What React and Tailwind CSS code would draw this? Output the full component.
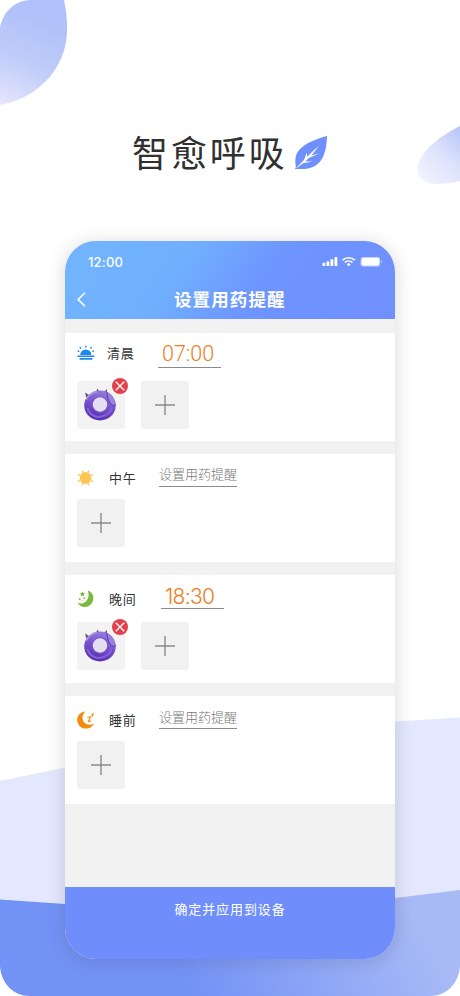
import React, { useState } from "react";

const SunriseIcon = () => (
  <svg width="18" height="16" viewBox="0 0 18 16" fill="#1e88e5">
    <path d="M3.200 10a5.600 5.600 0 0 1 11.200 0z" />
    <rect x="0.300" y="10.400" width="17.200" height="1.600" rx="0.700" />
    <rect x="2.400" y="13" width="13.200" height="1.700" rx="0.800" />
    <g stroke="#1e88e5" strokeWidth="1.500" strokeLinecap="round">
      <path d="M8.800 1.300v.7M3.200 2.600l.4.500M14.400 2.600l-.4.500M1.200 6l.5.200M16.400 6l-.5.200" />
    </g>
  </svg>
);

const SunIcon = () => (
  <svg width="18" height="18" viewBox="0 0 18 18">
    <circle cx="8.500" cy="9" r="5.900" fill="#fcc554" />
    <g fill="#fbc04a">
      <path d="M4.800.9l2 2-1.800.9zM12.200.9l-.2 2.900-1.800-.9zM16.600 5.300l-1.700 2.100-1-1.900zM16.600 12.700l-2.700-.2 1-1.900zM12.200 17.100l-2-2 1.800-.9zM4.800 17.100l.2-2.900 1.800.9zM.4 12.700l1.700-2.100 1 1.900zM.4 5.300l2.700.2-1 1.900z" />
    </g>
  </svg>
);

const MoonIcon = () => (
  <svg width="18" height="18" viewBox="0 0 18 18" fill="#7cb83a">
    <path d="M10.600.6c4.200 1.300 6.500 4.900 5.600 9.200-.9 4.600-4.900 7.700-9.300 7.200C4 16.700 1.700 15 .4 12.500c2.700 1.600 5.900 1.300 8.200-.8C11.700 9 12.400 4.500 10.600.6z" />
    <path d="M5.400 1.400l.8 1.700 1.900.2-1.400 1.300.4 1.900-1.700-1-1.700.9.500-1.800L2.800 3.300l1.900-.2z" />
    <circle cx="2.700" cy="9.200" r="0.900" />
    <circle cx="7.300" cy="8.200" r="0.900" />
    <circle cx="4.700" cy="10.500" r="0.500" />
  </svg>
);

const SleepIcon = () => (
  <svg width="18" height="18" viewBox="0 0 18 18" fill="#f58a0b">
    <path d="M8.600.6C4.100.5.2 4.300.2 9c0 4.800 3.800 8.600 8.600 8.600 3.900 0 7-2.200 8.300-5.400-1.500 1.200-3.100 1.600-4.900 1.500C8.500 13.500 5.600 10.700 5.500 7 5.400 4.400 6.600 2 8.600.6z" />
    <path
      d="M10.400 6.300l3.100-.4-2.200 4.600 2.600-.4M14.600 3.200l1.500-.2-1.200 2 1.500-.2"
      fill="none"
      stroke="#f58a0b"
      strokeWidth="1.100"
    />
  </svg>
);

const Leaf = () => (
  <svg width="34" height="36" viewBox="0 0 34 36" className="ml-[6px]">
    <path
      d="M33 .8C24 4.200 5 8.500 1.700 22c-.7 4-.4 7.200.3 9.800L.8 34.300c4.500-.8 8.500 0 13.200-.9C27 31.500 32.800 19 33 .8z"
      fill="#6f8ffc"
    />
    <path
      d="M1 34.400C4.500 30 7.500 28 9.900 25l3-7.600.3 4.400C16.500 18.500 20 15 25.300 10.500 21.500 15.500 19.500 18 17.200 20.600l8.300-2.300-10.600 4.700-3.500 3.600c2.300 0 5.200-.3 7.400-.2-4.300.9-6.800 1.200-9.300 1.700C6 30.500 4 32.500 1 34.400z"
      fill="#fff"
    />
  </svg>
);

const StatusIcons = () => (
  <svg width="61" height="12" viewBox="0 0 61 12" fill="#fff">
    <rect x="0.500" y="6.800" width="2.800" height="3.200" rx="0.600" />
    <rect x="4.500" y="5.300" width="2.800" height="4.700" rx="0.600" />
    <rect x="8.500" y="3.300" width="2.800" height="6.700" rx="0.600" />
    <rect x="12.500" y="1.100" width="2.800" height="8.900" rx="0.600" />
    <g fill="none" stroke="#fff" strokeWidth="1.700">
      <path d="M20.600 4.200a8.800 8.800 0 0 1 12.200 0M22.900 6.500a5.500 5.500 0 0 1 7.600 0" />
    </g>
    <path d="M24.700 8.200a3 3 0 0 1 4 0l-2 2.100z" />
    <rect x="38.600" y="0.900" width="19.600" height="9.600" rx="2.800" opacity="0.600" />
    <rect x="39.800" y="2" width="17.200" height="7.400" rx="1.800" />
    <path d="M59.200 4.200c1.300.5 1.300 2.400 0 2.900z" opacity="0.600" />
  </svg>
);

const Inhaler = () => (
  <svg width="34" height="34" viewBox="0 0 34 34">
    <defs>
      <linearGradient id="ring" x1="0.700" y1="0" x2="0.400" y2="1">
        <stop offset="0" stopColor="#9a7ee0" />
        <stop offset="0.500" stopColor="#7750cc" />
        <stop offset="1" stopColor="#5330ae" />
      </linearGradient>
    </defs>
    <path d="M3 9.500l-.8-5 4 2.500zM13 4l1.400-3.500L16.500 4zM21 4l2.700-3 .7 4.500z" fill="#655d80" />
    <ellipse cx="17" cy="17.500" rx="15.800" ry="15" fill="url(#ring)" />
    <path d="M3 12C5 8 9 4.500 14 3.500" stroke="#a995dd" strokeWidth="1.500" fill="none" />
    <path d="M4.500 20c2 7 8 10 14 8.500 5-1 9-4.500 10.500-9" stroke="#8560dc" strokeWidth="2" fill="none" />
    <path d="M24 4c4 1.500 6.500 4.500 7.500 8.500l1 4-2.500 1c-3-1.500-4.500-5-5-8z" fill="#9b80da" />
    <path d="M24 4c0 5 1.500 11 6 13.500l2.500-1" stroke="#5c3bac" strokeWidth="1" fill="none" />
    <circle cx="17" cy="16.500" r="8.300" fill="#7a58c8" />
    <circle cx="17" cy="16.500" r="7.200" fill="#e3dff0" />
  </svg>
);

const AddTile = () => (
  <button className="flex h-12 w-12 items-center justify-center rounded-[3px] bg-[#f1f1f1]">
    <svg width="20" height="20" viewBox="0 0 20 20" stroke="#8a8a8a" strokeWidth="1.400">
      <path d="M10 0v20M0 10h20" />
    </svg>
  </button>
);

const MedicineTile = ({ onRemove }) => (
  <div className="relative flex h-12 w-12 items-center justify-center rounded-[3px] bg-[#f3f3f3]">
    <div className="-ml-[3px]">
      <Inhaler />
    </div>
    <button
      onClick={onRemove}
      className="absolute -top-[3px] -right-[3px] flex h-4 w-4 items-center justify-center rounded-full bg-[#e33f4c]"
    >
      <svg width="10" height="10" viewBox="0 0 10 10" stroke="#fff" strokeWidth="1.300">
        <path d="M.8.8l8.400 8.400M9.200.8L.8 9.200" />
      </svg>
    </button>
  </div>
);

const reminders = [
  {
    label: "清晨",
    icon: <SunriseIcon />,
    time: "07:00",
    medicine: true,
    row: "h-[48px]",
    iconPos: "mt-[12px]",
    labelPos: "mt-[10px] ml-3",
    timePos: "ml-[23px] mt-[8px] h-[27px] w-[63px] pl-[4px] font-['Roboto'] text-[21.500px] leading-[25px]",
  },
  {
    label: "中午",
    icon: <SunIcon />,
    row: "h-[45px]",
    iconPos: "mt-[15px]",
    labelPos: "mt-[14px] ml-[14px]",
    timePos: "ml-[22px] mt-[11px] h-[22px]",
  },
  {
    label: "晚间",
    icon: <MoonIcon />,
    time: "18:30",
    medicine: true,
    row: "h-[47px]",
    iconPos: "mt-[15px]",
    labelPos: "mt-[14px] ml-[14px]",
    timePos:
      "ml-[24px] mt-[9px] h-[25px] w-[63px] pl-[4px] font-['Inter'] text-[21px] leading-[25px] tracking-[-0.700px]",
  },
  {
    label: "睡前",
    icon: <SleepIcon />,
    row: "h-[45px]",
    iconPos: "mt-[15px]",
    labelPos: "mt-[14px] ml-[14px]",
    timePos: "ml-[22px] mt-[12px] h-[21px]",
  },
];

const Reminder = ({ item }) => {
  let [medicine, setMedicine] = useState(item.medicine);
  return (
    <section className="h-[108px] bg-white pl-3">
      <div className={`flex items-start ${item.row}`}>
        <div className={`w-[18px] ${item.iconPos}`}>{item.icon}</div>
        <p className={`w-7 text-[13px] leading-[19px] tracking-[0.800px] whitespace-nowrap text-[#333] ${item.labelPos}`}>
          {item.label}
        </p>
        {item.time ? (
          <div className={`border-b border-[#8b8b8b] font-light text-[#ee7c1b] ${item.timePos}`}>
            {item.time}
          </div>
        ) : (
          <div
            className={`w-[78px] border-b border-[#8b8b8b] text-[13px] leading-[18px] font-light whitespace-nowrap text-[#777] ${item.timePos}`}
          >
            设置用药提醒
          </div>
        )}
      </div>
      <div className="flex gap-4">
        {medicine && <MedicineTile onRemove={() => setMedicine(false)} />}
        <AddTile />
      </div>
    </section>
  );
};

const Backdrop = () => (
  <svg className="absolute inset-0" width="460" height="996" viewBox="0 0 460 996">
    <defs>
      <linearGradient id="blob" gradientUnits="userSpaceOnUse" x1="45" y1="20" x2="5" y2="108">
        <stop offset="0" stopColor="#b0c0f8" />
        <stop offset="0.500" stopColor="#c0cdfa" />
        <stop offset="1" stopColor="#e8e6fb" />
      </linearGradient>
      <linearGradient id="drop" x1="1" y1="0" x2="0.300" y2="1">
        <stop offset="0" stopColor="#b4c4f9" />
        <stop offset="0.500" stopColor="#dce2fc" />
        <stop offset="1" stopColor="#f1f1fe" />
      </linearGradient>
      <linearGradient id="wave" gradientUnits="userSpaceOnUse" x1="190" y1="990" x2="400" y2="880">
        <stop offset="0" stopColor="#7392f6" />
        <stop offset="1" stopColor="#a8baf6" />
      </linearGradient>
    </defs>
    <path d="M0 28C3 12 14 1 30 0H64C68 20 69 40 62 56 52 82 28 100 0 105z" fill="url(#blob)" />
    <path d="M460 126C440 136 425 148 419 162c-4 12 2 21 16 22 9 0 17-1 25-3z" fill="url(#drop)" />
    <path d="M0 781L65 767.500 395 721.500 460 717.500V910H0z" fill="#e3e8fe" />
    <path d="M0 899.500L65 904 395 898 460 890V966c-1 17-13 30-30 30H30C13 996 1 983 0 966z" fill="url(#wave)" />
  </svg>
);

const App = () => {
  return (
    <div className="relative h-[996px] w-[460px] overflow-hidden bg-white font-['Noto_Sans_CJK_SC',sans-serif]">
      <Backdrop />
      <div className="relative flex flex-col items-center">
        <div className="flex h-[241px] w-[330px] items-start pt-[125px] pl-[67px]">
          <h1 className="text-[36px] leading-[53px] tracking-[2.900px] whitespace-nowrap text-[#303030]">智愈呼吸</h1>
          <div className="pt-[10px]">
            <Leaf />
          </div>
        </div>
        <div className="flex h-[718px] w-[330px] flex-col overflow-hidden rounded-[31px] bg-[#f1f1f1] shadow-[0_2px_16px_2px_rgba(60,60,70,0.170)]">
          <header className="h-[78px] bg-[linear-gradient(125deg,#72b4fd_0%,#70b0fe_34%,#6e94fe_60%,#708ffd_100%)] text-white">
            <div className="flex items-center justify-between pt-[11px] pr-[12px] pl-[23px]">
              <span className="font-['Inter'] text-[13px] leading-[20px] font-medium tracking-[0.200px]">12:00</span>
              <StatusIcons />
            </div>
            <div className="flex items-center pt-[14px] pl-[12px]">
              <svg width="9" height="15" viewBox="0 0 9 15" fill="none" stroke="#fff" strokeWidth="1.600">
                <path d="M8 .8L1.200 7.500 8 14.200" />
              </svg>
              <h2 className="ml-[88px] text-[17.500px] leading-[26px] font-bold tracking-[1.100px] whitespace-nowrap">
                设置用药提醒
              </h2>
            </div>
          </header>
          <main className="flex flex-1 flex-col gap-[13px] pt-[14px]">
            {reminders.map((item) => (
              <Reminder key={item.label} item={item} />
            ))}
          </main>
          <button className="h-[72px] bg-[#6f8efc] pb-[29px] text-[13px] leading-[19px] tracking-[0.900px] text-white">
            确定并应用到设备
          </button>
        </div>
      </div>
    </div>
  );
};

export default App;
